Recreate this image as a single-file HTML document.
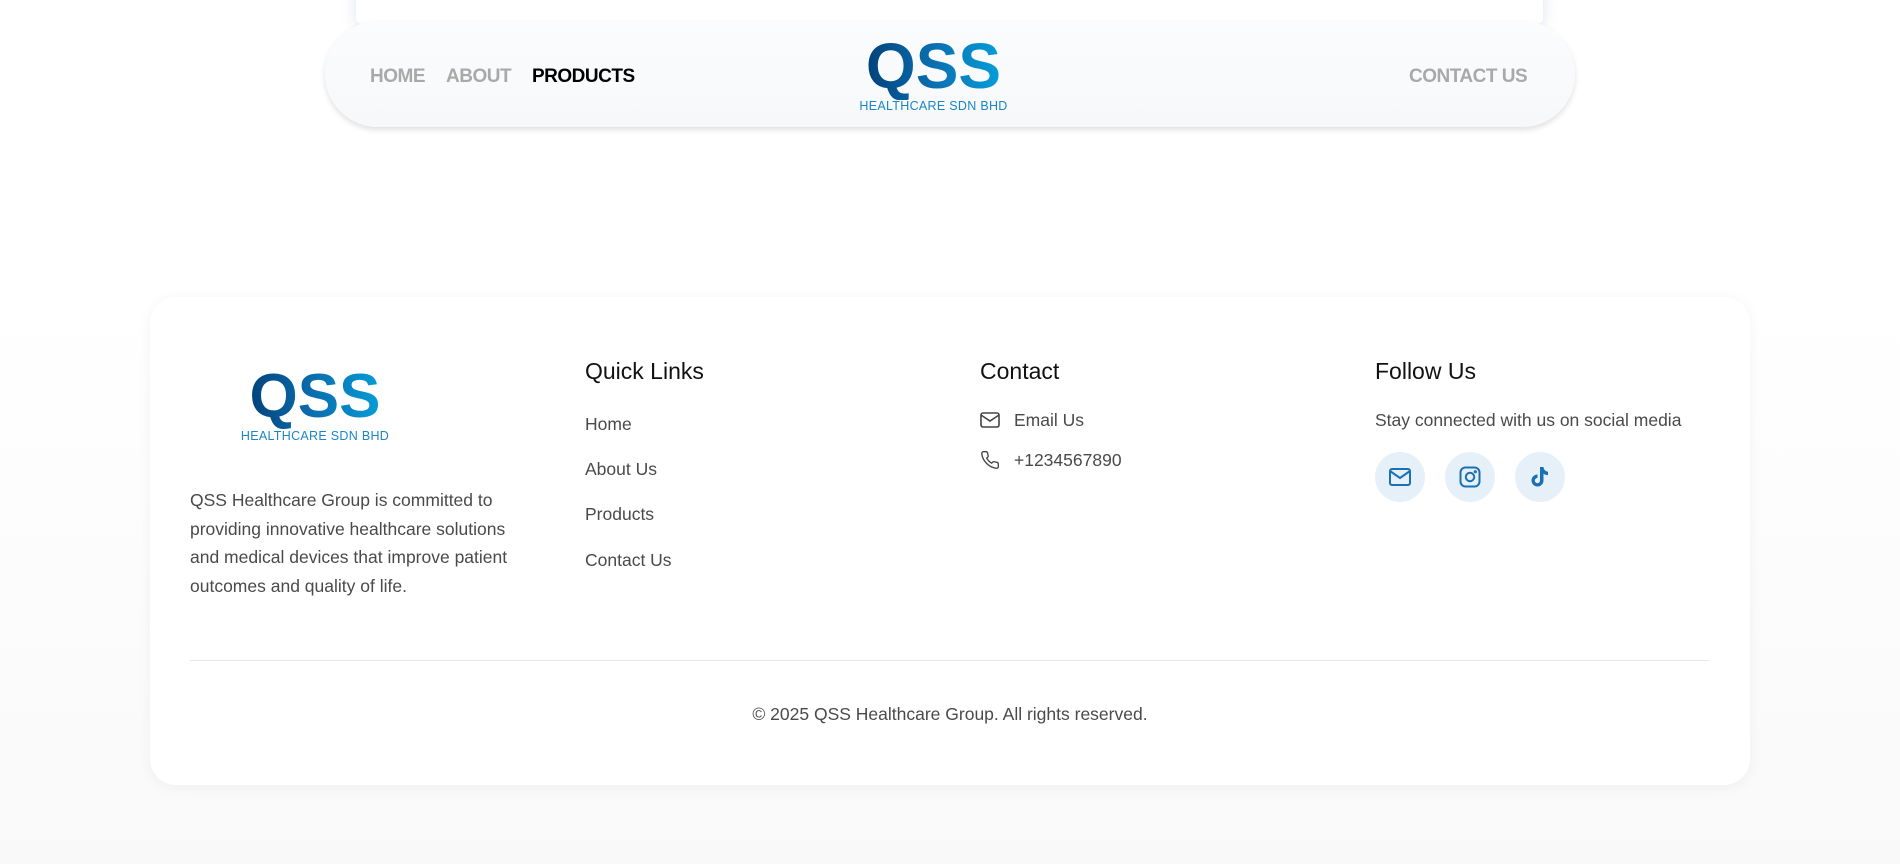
<!DOCTYPE html>
<html><head><meta charset="utf-8"><style>
*{margin:0;padding:0;box-sizing:border-box}
body{width:1900px;height:864px;overflow:hidden;background:linear-gradient(#fff 0,#fff 300px,#f9f9f9 864px);font-family:"Liberation Sans",sans-serif;position:relative}
.topcard{position:absolute;left:356px;top:-20px;width:1187px;height:44px;background:#fff;box-shadow:0 4px 14px rgba(120,150,190,.25);border-radius:0 0 6px 6px}
.nav{position:absolute;left:325px;top:21px;width:1250px;height:106px;border-radius:53px;background:linear-gradient(#fbfcfd,#f6f8fa);box-shadow:0 3px 6px rgba(0,0,0,.12)}
.nl{position:absolute;top:65px;font-size:19px;font-weight:bold;color:#a9a9a9;letter-spacing:-.5px;line-height:24px}
.logo{position:absolute;text-align:center}
.logo .q{font-weight:bold;background:linear-gradient(90deg,#003a72,#0a6fb0 50%,#05a6df);-webkit-background-clip:text;background-clip:text;color:transparent;letter-spacing:0px;display:block}
.logo .s{color:#1a86c8;display:block;letter-spacing:.3px}
.card{position:absolute;left:150px;top:297px;width:1600px;height:488px;background:#fff;border-radius:26px;box-shadow:0 2px 14px rgba(0,0,0,.05)}
.h{position:absolute;font-size:23px;color:#111;top:357px;line-height:28px}
.t{position:absolute;font-size:17.5px;color:#4a4a4a;line-height:22px}
.desc{position:absolute;left:190px;top:486px;width:340px;font-size:17.5px;line-height:28.7px;color:#4a4a4a}
.circ{position:absolute;top:452px;width:50px;height:50px;border-radius:50%;background:#e6f0f8;display:flex;align-items:center;justify-content:center}
</style></head><body>
<div class="topcard"></div>
<div class="nav"></div>
<div class="nl" style="left:370px">HOME</div>
<div class="nl" style="left:446px">ABOUT</div>
<div class="nl" style="left:532px;color:#000">PRODUCTS</div>
<div class="nl" style="left:1409px">CONTACT US</div>
<div class="logo" style="left:855px;top:32px;width:157px"><span class="q" style="font-size:64px;line-height:68px">QSS</span><span class="s" style="font-size:12.5px;line-height:12px;margin-top:0">HEALTHCARE SDN BHD</span></div>
<div class="card"></div>
<div class="logo" style="left:236px;top:364px;width:158px"><span class="q" style="font-size:62px;line-height:66px">QSS</span><span class="s" style="font-size:12.5px;line-height:12px">HEALTHCARE SDN BHD</span></div>
<div class="desc">QSS Healthcare Group is committed to providing innovative healthcare solutions and medical devices that improve patient outcomes and quality of life.</div>
<div class="h" style="left:585px">Quick Links</div>
<div class="t" style="left:585px;top:413px">Home</div>
<div class="t" style="left:585px;top:458px">About Us</div>
<div class="t" style="left:585px;top:503px">Products</div>
<div class="t" style="left:585px;top:549px">Contact Us</div>
<div class="h" style="left:980px">Contact</div>
<svg style="position:absolute;left:980px;top:411px" width="20" height="18" viewBox="0 0 20 18" fill="none" stroke="#444" stroke-width="1.6"><rect x="1" y="2" width="18" height="14" rx="2"/><path d="M1 4l9 6 9-6"/></svg>
<div class="t" style="left:1014px;top:409px">Email Us</div>
<svg style="position:absolute;left:980px;top:450px" width="20" height="20" viewBox="0 0 24 24" fill="none" stroke="#444" stroke-width="1.6"><path d="M22 16.9v3a2 2 0 0 1-2.2 2 19.8 19.8 0 0 1-8.6-3.1 19.5 19.5 0 0 1-6-6A19.8 19.8 0 0 1 2.1 4.2 2 2 0 0 1 4.1 2h3a2 2 0 0 1 2 1.7c.1 1 .4 1.9.7 2.8a2 2 0 0 1-.5 2.1L8 9.8a16 16 0 0 0 6 6l1.3-1.3a2 2 0 0 1 2.1-.4c.9.3 1.8.6 2.8.7a2 2 0 0 1 1.7 2z"/></svg>
<div class="t" style="left:1014px;top:449px">+1234567890</div>
<div class="h" style="left:1375px">Follow Us</div>
<div class="t" style="left:1375px;top:409px">Stay connected with us on social media</div>
<div class="circ" style="left:1375px"><svg width="22" height="20" viewBox="0 0 22 20" fill="none" stroke="#1a6fb5" stroke-width="2"><rect x="1" y="2" width="20" height="16" rx="2"/><path d="M1 4l10 7 10-7"/></svg></div>
<div class="circ" style="left:1445px"><svg width="22" height="22" viewBox="0 0 22 22" fill="none" stroke="#1a6fb5" stroke-width="2"><rect x="1.5" y="1.5" width="19" height="19" rx="5"/><circle cx="11" cy="11" r="4.2"/><circle cx="16.3" cy="5.7" r=".6" fill="#1a6fb5"/></svg></div>
<div class="circ" style="left:1515px"><svg width="20" height="22" viewBox="0 0 20 22"><path fill="#1a6fb5" d="M10 1h3.5c.2 2.6 2 4.5 4.5 4.7v3.5c-1.7 0-3.2-.5-4.5-1.4v6.7a6 6 0 1 1-6-6v3.5a2.6 2.6 0 1 0 2.5 2.5z"/></svg></div>
<div style="position:absolute;left:190px;top:660px;width:1519px;height:1px;background:#e6e6e6"></div>
<div class="t" style="left:0;width:1900px;text-align:center;top:703px">© 2025 QSS Healthcare Group. All rights reserved.</div>
</body></html>
